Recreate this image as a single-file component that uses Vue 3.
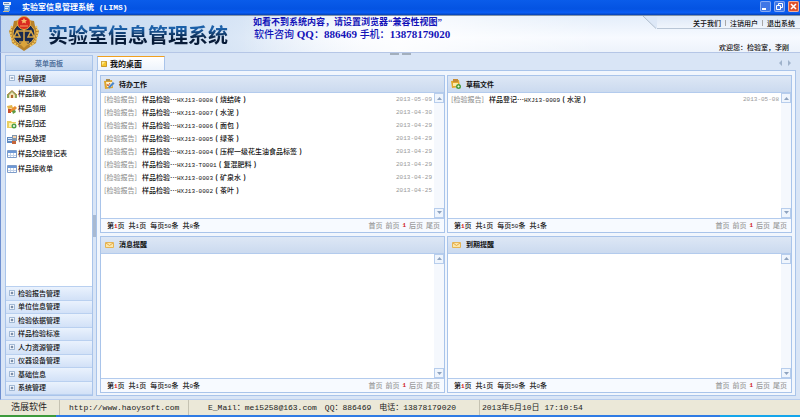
<script setup>
const tools = [
  { icon: 'house', text: '样品接收' },
  { icon: 'pencil', text: '样品领用' },
  { icon: 'return', text: '样品归还' },
  { icon: 'process', text: '样品处理' },
  { icon: 'table', text: '样品交接登记表' },
  { icon: 'table', text: '样品接收单' },
]

const groups = [
  '检验报告管理', '单位信息管理', '检验依据管理', '样品检验标准',
  '人力资源管理', '仪器设备管理', '基础信息', '系统管理',
]

const panels = [
  {
    title: '待办工作', icon: 'todo', total: 8,
    rows: [
      { kind: '样品检验', code: 'HXJ13-0008', name: '烧结砖', date: '2013-05-09' },
      { kind: '样品检验', code: 'HXJ13-0007', name: '水泥', date: '2013-04-30' },
      { kind: '样品检验', code: 'HXJ13-0006', name: '面包', date: '2013-04-29' },
      { kind: '样品检验', code: 'HXJ13-0005', name: '绿茶', date: '2013-04-29' },
      { kind: '样品检验', code: 'HXJ13-0004', name: '压榨一级花生油食品标签', date: '2013-04-29' },
      { kind: '样品检验', code: 'HXJ13-T0001', name: '复混肥料', date: '2013-04-29' },
      { kind: '样品检验', code: 'HXJ13-0003', name: '矿泉水', date: '2013-04-29' },
      { kind: '样品检验', code: 'HXJ13-0002', name: '茶叶', date: '2013-04-25' },
    ],
  },
  {
    title: '草稿文件', icon: 'draft', total: 1,
    rows: [{ kind: '样品登记', code: 'HXJ13-0009', name: '水泥', date: '2013-05-08' }],
  },
  { title: '消息提醒', icon: 'mail', total: 0, rows: [] },
  { title: '到期提醒', icon: 'mail', total: 0, rows: [] },
]
</script>

<template>
  <div class="window">
    <div class="titlebar">
      <svg class="app-icon" viewBox="0 0 10 12" aria-hidden="true">
        <path d="M1 1h8v3H1z" fill="#e9eef4" /><path d="M2 2h5v1H2z" fill="#6f8fae" />
        <path d="M2 4h6v6H2z" fill="#6aa7e8" /><path d="M3 5h4v1H3zM3 7h3v1H3z" fill="#e8f4ff" />
        <path d="M1 10h6v1H1z" fill="#c9b98c" />
      </svg>
      <span class="caption">实验室信息管理系统<span class="caption-en"> (LIMS)</span></span>
      <div class="window-buttons">
        <button type="button" aria-label="最小化">
          <svg viewBox="0 0 11 11"><path d="M2 8h4" stroke="#fff" stroke-width="2" /></svg>
        </button>
        <button type="button" aria-label="还原">
          <svg viewBox="0 0 11 11" fill="none" stroke="#fff"><path d="M4.500 4V2.500h4v4H7" /><path d="M2.500 4.500h4v4h-4z" /></svg>
        </button>
        <button type="button" class="close" aria-label="关闭">
          <svg viewBox="0 0 11 11"><path d="M3 3l5 5M8 3l-5 5" stroke="#fff" stroke-width="1.600" /></svg>
        </button>
      </div>
    </div>

    <header class="banner">
      <svg class="emblem" viewBox="0 0 32 36" aria-hidden="true">
        <path d="M16 1l4 3 6 1 1 5 4 5-2 6-1 6-6 4-6 4-6-4-6-4-1-6-2-6 4-5 1-5 6-1z" fill="#b7822b" />
        <path d="M4 10c-3 7-1 16 6 20M28 10c3 7 1 16-6 20" fill="none" stroke="#efc45c" stroke-width="2" stroke-dasharray="2 1" />
        <circle cx="16" cy="18" r="11" fill="#192a50" />
        <circle cx="16" cy="18" r="11" fill="none" stroke="#e8b64d" />
        <path d="M16 12v15M9 15h14M9 15l-3 6h6zM23 15l-3 6h6zM11 26h10" fill="none" stroke="#d7a645" stroke-width="1.500" />
        <path d="M12 28l4-4 4 4-4 4z" fill="#dba43b" />
        <circle cx="16" cy="7" r="6.500" fill="#d92b20" stroke="#e9ae3a" />
        <path d="M16 2l1 2h2l-1.500 1.500.500 2-2-1-2 1 .500-2L13 4h2z" fill="#f8bb6b" />
        <path d="M12 10h8" stroke="#f5a25e" />
      </svg>
      <h1>实验室信息管理系统</h1>
      <div class="notice">
        <p class="notice-top">如看不到系统内容，请设置浏览器“兼容性视图”</p>
        <p class="notice-contact">软件咨询<span class="serif"> QQ</span>：<span class="serif">886469 </span>手机：<span class="serif">13878179020</span></p>
      </div>
      <div class="account">
        <nav class="links">
          <svg class="slope" viewBox="0 0 14 13" aria-hidden="true"><path d="M0 0h14v13z" fill="#dde8f7" /><path d="M0 0l13 12.500" stroke="#aebccb" /></svg>
          <div class="link-row">
            <a href="#">关于我们</a><i></i><a href="#">注销用户</a><i></i><a href="#">退出系统</a>
          </div>
        </nav>
        <p class="welcome">欢迎您：检验室，李刚</p>
      </div>
    </header>

    <main class="workspace">
      <aside class="sidebar">
        <h2>菜单面板</h2>
        <button type="button" class="group open">
          <svg viewBox="0 0 7 7"><path d="M.500.500h6v6h-6z" fill="#f5f9ff" stroke="#8ea9c9" /><path d="M2 3.500h3" stroke="#405a80" /></svg>样品管理
        </button>
        <ul class="tools">
          <li v-for="t in tools" :key="t.text">
            <a href="#">
              <svg viewBox="0 0 10 10" aria-hidden="true">
                <template v-if="t.icon === 'house'">
                  <path d="M0 6l5-4.500L10 6v3H0z" fill="#8aa65a" /><path d="M2 6l3-3 3 3v3H2z" fill="#f1e0b5" /><path d="M4 6h2v3H4z" fill="#b0642b" /><path d="M0 6l5-4.500L10 6" fill="none" stroke="#b98a4c" />
                </template>
                <template v-else-if="t.icon === 'pencil'">
                  <path d="M0 2l5-1 1 3-5 1z" fill="#e3b54a" /><path d="M1 5h3v4H1z" fill="#c64e30" /><path d="M3 8l1-3 4-3 2 2-4 4z" fill="#e98e31" /><path d="M5 7l3-1 1 2-3 2z" fill="#5b9a44" />
                </template>
                <template v-else-if="t.icon === 'return'">
                  <path d="M0 2h4l1 1h4v6H0z" fill="#e9cf62" /><path d="M2 4h7v4H2z" fill="#fbf1b0" /><circle cx="7" cy="7" r="2.500" fill="#4fa04a" /><path d="M6 7h2M7 6v2" stroke="#fff" />
                </template>
                <template v-else-if="t.icon === 'process'">
                  <path d="M0 3h6v6H0z" fill="#5f8ac1" /><path d="M1 4h4v1H1zM1 6h4v1H1z" fill="#dceafb" /><path d="M5 1h5v6H5z" fill="#8196ad" /><path d="M6 2h3v2H6z" fill="#f6d3ad" /><path d="M5 7h4v3H5z" fill="#c5653a" />
                </template>
                <template v-else>
                  <path d="M.500 1.500h9v7h-9z" fill="#fff" stroke="#7e9dca" /><path d="M1 2h8v2H1z" fill="#6d98d6" /><path d="M1 6.500h8M3.500 4v4M6.500 4v4" stroke="#c3d2e8" />
                </template>
              </svg>{{ t.text }}
            </a>
          </li>
        </ul>
        <div class="groups">
          <button v-for="g in groups" :key="g" type="button" class="group">
            <svg viewBox="0 0 7 7"><path d="M.500.500h6v6h-6z" fill="#f5f9ff" stroke="#8ea9c9" /><path d="M2 3.500h3M3.500 2v3" stroke="#405a80" /></svg>{{ g }}
          </button>
        </div>
      </aside>

      <div class="splitter"><span></span></div>

      <section class="content">
        <span class="top-grip"></span>
        <div class="tabs">
          <button type="button" class="tab">
            <svg viewBox="0 0 7 7"><path d="M.500.500h6v6h-6z" fill="#f6c52c" stroke="#bf8a15" /><path d="M1 1h4L1 5z" fill="#ffe98a" /></svg>我的桌面
          </button>
          <svg class="tab-arrows" viewBox="0 0 12 6" aria-hidden="true"><path d="M3 0v6L0 3zM9 0v6l3-3z" fill="#9fb2cb" /></svg>
        </div>
        <div class="desktop">
          <article v-for="p in panels" :key="p.title" class="panel">
            <h3>
              <svg viewBox="0 0 12 12" aria-hidden="true">
                <template v-if="p.icon === 'todo'">
                  <path d="M1 3l8-1 1 8-8 1z" fill="#dda52e" /><path d="M3 4h6v5H4z" fill="#fdf3cf" /><path d="M3 1h4v2H3z" fill="#a98c50" /><path d="M5 9l5-5 1.500 1.500-5 5z" fill="#4a87cb" /><path d="M4 6l1 2 2-3" fill="none" stroke="#cf5c31" />
                </template>
                <template v-else-if="p.icon === 'draft'">
                  <path d="M1 3l8-1 1 7-8 1z" fill="#e3a92c" /><path d="M3 1h5v3H3z" fill="#c58b34" /><path d="M3 5h5v3H3z" fill="#fdeaa8" /><circle cx="8.500" cy="8.500" r="2.500" fill="#4b9c3e" /><path d="M7.500 8.500h2M8.500 7.500v2" stroke="#e5f7dc" />
                </template>
                <template v-else>
                  <path d="M2.500 3.500h8v5h-8z" fill="#fde6a6" stroke="#e4b456" /><path d="M3 4l3.500 2.500L10 4" fill="none" stroke="#e4a94a" />
                </template>
              </svg>{{ p.title }}
            </h3>
            <div class="panel-body">
              <ul class="records">
                <li v-for="r in p.rows" :key="r.code">
                  <span class="tag">[检验报告]</span>
                  <a href="#">{{ r.kind }}…<span class="mono">{{ r.code }}</span><span class="paren">(</span>{{ r.name }}<span class="paren">)</span></a>
                  <time class="mono">{{ r.date }}</time>
                </li>
              </ul>
              <div class="scroll">
                <button type="button" aria-label="向上"><svg viewBox="0 0 5 3"><path d="M0 3L2.500 0 5 3z" fill="#8ea3bf" /></svg></button>
                <button type="button" aria-label="向下"><svg viewBox="0 0 5 3"><path d="M0 0l2.500 3L5 0z" fill="#8ea3bf" /></svg></button>
              </div>
            </div>
            <footer>
              <span>第<b class="mono">1</b>页</span>
              <span>共<span class="mono">1</span>页</span>
              <span>每页<span class="mono">50</span>条</span>
              <span>共<span class="mono">{{ p.total }}</span>条</span>
              <nav>
                <a href="#">首页</a><a href="#">前页</a><b class="mono">1</b><a href="#">后页</a><a href="#">尾页</a>
              </nav>
            </footer>
          </article>
        </div>
      </section>
    </main>

    <div class="status">
      <span class="cell company">浩展软件</span>
      <span class="cell site">http://www.haoysoft.com</span>
      <span class="cell contact"><span>E_Mail：mei5258@163.com</span><span>QQ：886469</span><span>电话：13878179020</span></span>
      <span class="cell clock">2013年5月10日 17:10:54</span>
    </div>
    <div class="taskbar"><span class="start"></span><span class="tray"></span></div>
  </div>
</template>

<style>
body {
  background: #d9e5f6;
}
</style>

<style scoped>
.window {
  display: flex;
  flex-direction: column;
  min-height: 100vh;
  font: 7px/13px "Noto Sans CJK SC", "Liberation Sans", sans-serif;
  font-weight: 500;
  color: #111;
  white-space: nowrap;
}
* {
  box-sizing: border-box;
}
h1, h2, h3, p, ul {
  margin: 0;
  padding: 0;
  list-style: none;
}
a {
  color: inherit;
  text-decoration: none;
}
button {
  margin: 0;
  padding: 0;
  border: 0;
  font: inherit;
  color: inherit;
  background: none;
}
svg {
  display: block;
  flex: none;
}
.mono {
  font-family: "Liberation Mono", monospace;
  font-size: 6px;
}

.titlebar {
  display: flex;
  align-items: center;
  height: 16px;
  padding: 0 1px 2px 2px;
  background: linear-gradient(#0a5cea, #0453e2 60%, #0a5df5 85%, #0540b0);
  border-bottom: 1px solid #8394a8;
  color: #fff;
  font-size: 8px;
  font-weight: 700;
}
.app-icon {
  width: 10px;
  height: 12px;
  margin-right: 10px;
}
.caption-en {
  font-family: "Liberation Mono", monospace;
  white-space: pre;
}
.window-buttons {
  display: flex;
  gap: 3px;
  margin-left: auto;
}
.window-buttons button {
  width: 11px;
  height: 11px;
  border-radius: 2px;
  background: #3f76e6;
  box-shadow: inset 0 0 0 1px #86a9f2;
}
.window-buttons .close {
  background: #e0512b;
  box-shadow: inset 0 0 0 1px #eeb09d;
}

.banner {
  display: flex;
  height: 37px;
  padding-left: 7px;
  background:
    linear-gradient(90deg, transparent 30%, rgba(255, 255, 255, 0.8) 50%, transparent 75%),
    linear-gradient(90deg, #c3d7f0, #d3e2f4 25%, transparent 45%),
    linear-gradient(#e4eefa, #f7faff 60%, #edf3fb);
  border-bottom: 1px solid #b5c6e6;
  border-left: 1px solid #6e8fd0;
}
.emblem {
  width: 32px;
  height: 36px;
  margin-right: 8px;
}
h1 {
  width: 205px;
  font-size: 20px;
  line-height: 37px;
  font-weight: 700;
  color: transparent;
  background: linear-gradient(#1c60a8 35%, #071b38 65%);
  -webkit-background-clip: text;
  background-clip: text;
}
.notice {
  padding-top: 1px;
  color: #1212b8;
  font-weight: 700;
}
.notice-top {
  font: 700 9px/11px "Liberation Serif", "Noto Sans CJK SC", serif;
}
.notice-contact {
  padding-left: 1px;
  font: 500 10px/11px "Noto Sans CJK SC", sans-serif;
}
.serif {
  font: 700 11px/11px "Liberation Serif", serif;
  white-space: pre;
}
.account {
  margin-left: auto;
}
.links {
  display: flex;
  height: 13px;
}
.slope {
  width: 14px;
  height: 13px;
}
.link-row {
  display: flex;
  align-items: center;
  gap: 4px;
  padding: 2px 5px 0 36px;
  background: linear-gradient(#dde8f7, #f0f5fc);
  border-bottom: 1px solid #b9c6d6;
}
.link-row i {
  width: 1px;
  height: 6px;
  background: #a8a8a8;
}
.welcome {
  padding: 12px 11px 0 0;
  text-align: right;
}

.workspace {
  display: grid;
  grid-template-columns: 88px 3px minmax(0, 1fr);
  flex: 1;
  padding: 2px 4px 3px;
  background: #d9e5f6;
  border-left: 1px solid #6e8fd0;
  border-bottom: 1px solid #b8cdee;
}
.sidebar {
  display: flex;
  flex-direction: column;
  border: 1px solid #a9c4ea;
  background: #fff;
}
h2 {
  height: 15px;
  font-size: 7px;
  line-height: 14px;
  font-weight: 700;
  text-align: center;
  color: #54749f;
  background: linear-gradient(#dae6f7, #c3d6ef);
  border-bottom: 1px solid #99bbe8;
}
.group {
  display: flex;
  flex: 1;
  align-items: center;
  gap: 3px;
  padding-left: 3px;
  background: linear-gradient(#eaf2fd, #d2e1f7);
  border-bottom: 1px solid #b9d0f0;
  line-height: 11px;
}
.group.open {
  flex: 0 0 15px;
}
.group svg {
  width: 6px;
  height: 6px;
}
.tools {
  flex: 1;
}
.tools a {
  display: flex;
  align-items: center;
  gap: 1px;
  height: 15px;
  padding-left: 1px;
}
.tools svg {
  width: 10px;
  height: 10px;
}
.groups {
  display: flex;
  flex-direction: column;
  height: 109px;
  border-top: 1px solid #b9d0f0;
}
.splitter {
  display: flex;
  align-items: center;
}
.splitter span {
  width: 3px;
  height: 22px;
  background: #a9bad2;
}

.content {
  position: relative;
  display: flex;
  flex-direction: column;
}
.top-grip {
  position: absolute;
  top: -2px;
  left: 42%;
  width: 21px;
  height: 2px;
  background: linear-gradient(90deg, #a3afbd 43%, transparent 43% 57%, #a3afbd 57%);
}
.tabs {
  display: flex;
  align-items: center;
  height: 15px;
  padding: 1px 5px 0 1px;
}
.tab {
  display: flex;
  align-items: center;
  align-self: stretch;
  gap: 3px;
  width: 68px;
  padding-left: 3px;
  border: 1px solid #a9c4ea;
  border-top: 1px solid #f0a020;
  border-bottom: 0;
  background: linear-gradient(#fff, #eef4fc);
  font-size: 8px;
  font-weight: 700;
}
.tab svg {
  width: 6px;
  height: 6px;
}
.tab-arrows {
  width: 12px;
  height: 6px;
  margin-left: auto;
}
.desktop {
  display: grid;
  flex: 1;
  grid-template-columns: repeat(2, minmax(0, 1fr));
  grid-template-rows: repeat(2, minmax(0, 1fr));
  gap: 3px 2px;
  padding: 4px 3px 2px;
  background: #f1f6fd;
  border: 1px solid #a9c4ea;
}
.panel {
  display: flex;
  flex-direction: column;
  border: 1px solid #a9c4ea;
  background: #fff;
}
h3 {
  display: flex;
  align-items: center;
  gap: 4px;
  height: 17px;
  padding-left: 2px;
  font-size: 7px;
  font-weight: 700;
  background: linear-gradient(#dde7f5, #cbdaef);
  border-bottom: 1px solid #b3cbed;
}
h3 svg {
  width: 12px;
  height: 12px;
}
.panel-body {
  display: flex;
  flex: 1;
}
.records {
  flex: 1;
}
.records li {
  display: flex;
  height: 13px;
  padding: 0 2px 0 3px;
}
.tag, time {
  color: #999;
}
.tag {
  width: 38px;
}
.paren {
  display: inline-block;
  width: 7px;
  text-align: center;
  font-weight: 700;
}
time {
  margin-left: auto;
}
.scroll {
  display: flex;
  flex-direction: column;
  justify-content: space-between;
  width: 10px;
  background: #f5f8fd;
}
.scroll button {
  display: grid;
  place-items: center;
  height: 10px;
  border: 1px solid #b7cdec;
  background: #eff5fd;
}
.scroll svg {
  width: 5px;
  height: 3px;
}
footer {
  display: flex;
  gap: 4px;
  height: 14px;
  padding: 0 4px 0 6px;
  border-top: 1px solid #b3cbed;
  background: #f7faff;
}
footer b {
  color: #d01818;
}
footer nav {
  display: flex;
  gap: 3px;
  margin-left: auto;
  color: #999;
}

.status {
  display: flex;
  height: 15px;
  background: #ebe8d8;
  font: 8px/16px "Liberation Mono", "Noto Sans CJK SC", monospace;
  color: #222;
}
.cell {
  padding-left: 9px;
  border-right: 1px solid #c5c2b2;
}
.company {
  width: 60px;
  padding-left: 11px;
  font-size: 9px;
}
.site {
  width: 129px;
}
.contact {
  display: flex;
  gap: 8px;
  width: 291px;
  padding-left: 19px;
}
.clock {
  flex: 1;
  padding-left: 2px;
  border: 0;
}
.taskbar {
  display: flex;
  justify-content: space-between;
  height: 2px;
  background: #2f7be4;
}
.start {
  width: 7%;
  background: #3c9a3c;
}
.tray {
  width: 10%;
  background: #14a5ea;
}
</style>
